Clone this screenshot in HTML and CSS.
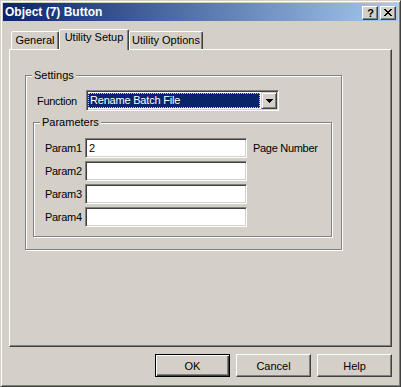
FILE: index.html
```html
<!DOCTYPE html>
<html lang="en">
<head>
    <meta charset="UTF-8">
    <title>Object (7) Button</title>
    <link rel="stylesheet" href="styles.css">
</head>
<body>
    <div class="window">
        <!-- Barra de título -->
        <div class="titlebar">
            <span class="title">Object (7) Button</span>
            <div class="caption-buttons">
                <button class="cap-btn help-glyph">?</button>
                <button class="cap-btn">
                    <svg width="8" height="7" viewBox="0 0 8 7" shape-rendering="crispEdges">
                        <path fill="#000" d="M0 0h2v1H0zM6 0h2v1H6zM1 1h2v1H1zM5 1h2v1H5zM2 2h4v1H2zM3 3h2v1H3zM2 4h4v1H2zM1 5h2v1H1zM5 5h2v1H5zM0 6h2v1H0zM6 6h2v1H6z"/>
                    </svg>
                </button>
            </div>
        </div>

        <!-- Abas -->
        <div class="tabs">
            <div class="tab tab-general">General</div>
            <div class="tab tab-setup active">Utility Setup</div>
            <div class="tab tab-options">Utility Options</div>
        </div>

        <div class="panel">
            <div class="group settings">
                <span class="group-title">Settings</span>
                <div class="function-row">
                    <span class="field-label function-label">Function</span>
                    <div class="combo">
                        <div class="combo-value"><span>Rename Batch File</span></div>
                        <div class="combo-button">
                            <svg width="7" height="4" viewBox="0 0 7 4" shape-rendering="crispEdges">
                                <path fill="#000" d="M0 0h7v1H0zM1 1h5v1H1zM2 2h3v1H2zM3 3h1v1H3z"/>
                            </svg>
                        </div>
                    </div>
                </div>

                <div class="group params">
                    <span class="group-title">Parameters</span>
                    <div class="param-row">
                        <span class="field-label">Param1</span>
                        <div class="textbox">2</div>
                        <span class="hint">Page Number</span>
                    </div>
                    <div class="param-row">
                        <span class="field-label">Param2</span>
                        <div class="textbox"></div>
                    </div>
                    <div class="param-row">
                        <span class="field-label">Param3</span>
                        <div class="textbox"></div>
                    </div>
                    <div class="param-row">
                        <span class="field-label">Param4</span>
                        <div class="textbox"></div>
                    </div>
                </div>
            </div>
        </div>

        <!-- Botões do diálogo -->
        <div class="dialog-buttons">
            <button class="btn default">OK</button>
            <button class="btn">Cancel</button>
            <button class="btn">Help</button>
        </div>
    </div>
</body>
</html>
```

FILE: styles.css
```css
/* Estilo do corpo */
body {
    margin: 0;
    padding: 0;
    background-color: #d4d0c8;
    font-family: "Liberation Sans", Arial, sans-serif;
    font-size: 11px;
    color: #000;
}

/* Janela */
.window {
    box-sizing: border-box;
    width: 401px;
    height: 387px;
    padding: 2px;
    background-color: #d4d0c8;
    border: 1px solid;
    border-color: #d4d0c8 #404040 #404040 #d4d0c8;
    box-shadow: inset 1px 1px 0 #fff, inset -1px -1px 0 #808080;
}

/* Barra de título */
.titlebar {
    height: 18px;
    display: flex;
    align-items: center;
    justify-content: space-between;
    background: linear-gradient(to right, #0a246a, #a6caf0);
}

.title {
    padding-left: 2px;
    color: #fff;
    font-weight: bold;
    font-size: 12px;
    line-height: 18px;
}

.caption-buttons {
    display: flex;
    gap: 2px;
    margin-right: 2px;
    margin-top: 1px;
}

.cap-btn {
    box-sizing: border-box;
    width: 16px;
    height: 14px;
    padding: 0;
    margin: 0;
    display: flex;
    align-items: center;
    justify-content: center;
    background-color: #d4d0c8;
    border: 1px solid;
    border-color: #fff #404040 #404040 #fff;
    box-shadow: inset -1px -1px 0 #808080;
    font-family: "Liberation Sans", Arial, sans-serif;
}

.help-glyph {
    font-weight: bold;
    font-size: 11px;
    line-height: 12px;
    padding-left: 1px;
}

/* Abas */
.tabs {
    display: flex;
    align-items: flex-end;
    height: 20px;
    margin: 8px 6px 0;
    padding-left: 2px;
    position: relative;
    z-index: 1;
}

.tab {
    box-sizing: border-box;
    height: 18px;
    padding-top: 2px;
    line-height: 13px;
    text-align: center;
    background-color: #d4d0c8;
    border: 1px solid;
    border-bottom: none;
    border-color: #fff #404040 transparent #fff;
    border-radius: 2px 2px 0 0;
    box-shadow: inset -1px 0 0 #808080;
}

.tab-general {
    width: 48px;
}

.tab-setup {
    width: 70px;
}

.tab-options {
    width: 74px;
}

.tab.active {
    height: 21px;
    margin-bottom: -1px;
    padding-top: 1px;
}

/* Painel da aba */
.panel {
    box-sizing: border-box;
    height: 298px;
    margin: 0 6px;
    padding: 25px 0 0 15px;
    border: 1px solid;
    border-color: #fff #404040 #404040 #fff;
    box-shadow: inset -1px -1px 0 #808080;
}

/* Caixas de grupo */
.group {
    position: relative;
    box-sizing: border-box;
    border: 1px solid #808080;
    box-shadow: 1px 1px 0 #fff, inset 1px 1px 0 #fff;
}

.group-title {
    position: absolute;
    top: -7px;
    left: 6px;
    padding: 0 2px;
    line-height: 13px;
    background-color: #d4d0c8;
}

.settings {
    width: 317px;
    height: 175px;
    padding: 14px 0 0 7px;
}

.function-row {
    display: flex;
    align-items: center;
    padding-left: 4px;
}

.field-label {
    letter-spacing: -0.3px;
}

.function-label {
    width: 49px;
}

/* Combo */
.combo {
    box-sizing: border-box;
    width: 193px;
    height: 21px;
    display: flex;
    background-color: #fff;
    border: 1px solid;
    border-color: #808080 #fff #fff #808080;
    box-shadow: inset 1px 1px 0 #404040, inset -1px -1px 0 #d4d0c8;
    padding: 1px;
}

.combo-value {
    flex: 1;
    box-sizing: border-box;
    margin: 1px 1px 1px 0;
    padding-left: 1px;
    background-color: #0a246a;
    border: 1px dotted #e6cf7a;
    color: #fff;
    line-height: 13px;
    letter-spacing: -0.2px;
    white-space: nowrap;
    overflow: hidden;
}

.combo-button {
    box-sizing: border-box;
    width: 16px;
    height: 17px;
    display: flex;
    align-items: center;
    justify-content: center;
    background-color: #d4d0c8;
    border: 1px solid;
    border-color: #d4d0c8 #404040 #404040 #d4d0c8;
    box-shadow: inset 1px 1px 0 #fff, inset -1px -1px 0 #808080;
}

/* Parâmetros */
.params {
    width: 299px;
    height: 115px;
    margin-top: 11px;
    padding: 15px 0 0 11px;
    display: flex;
    flex-direction: column;
    gap: 3px;
}

.param-row {
    display: flex;
    align-items: center;
}

.param-row .field-label {
    width: 40px;
}

.textbox {
    box-sizing: border-box;
    width: 162px;
    height: 20px;
    padding: 2px 3px;
    line-height: 14px;
    background-color: #fff;
    border: 1px solid;
    border-color: #808080 #fff #fff #808080;
    box-shadow: inset 1px 1px 0 #404040, inset -1px -1px 0 #d4d0c8;
}

.hint {
    margin-left: 6px;
    letter-spacing: -0.3px;
}

/* Botões do diálogo */
.dialog-buttons {
    display: flex;
    justify-content: flex-end;
    gap: 6px;
    margin-top: 7px;
    padding-right: 6px;
}

.btn {
    box-sizing: border-box;
    width: 75px;
    height: 23px;
    padding: 0;
    font-family: "Liberation Sans", Arial, sans-serif;
    font-size: 11px;
    color: #000;
    background-color: #d4d0c8;
    border: 1px solid;
    border-color: #fff #404040 #404040 #fff;
    box-shadow: inset -1px -1px 0 #808080;
}

.btn.default {
    border-color: #000;
    box-shadow: inset 1px 1px 0 #fff, inset -1px -1px 0 #404040, inset -2px -2px 0 #808080;
}
```
